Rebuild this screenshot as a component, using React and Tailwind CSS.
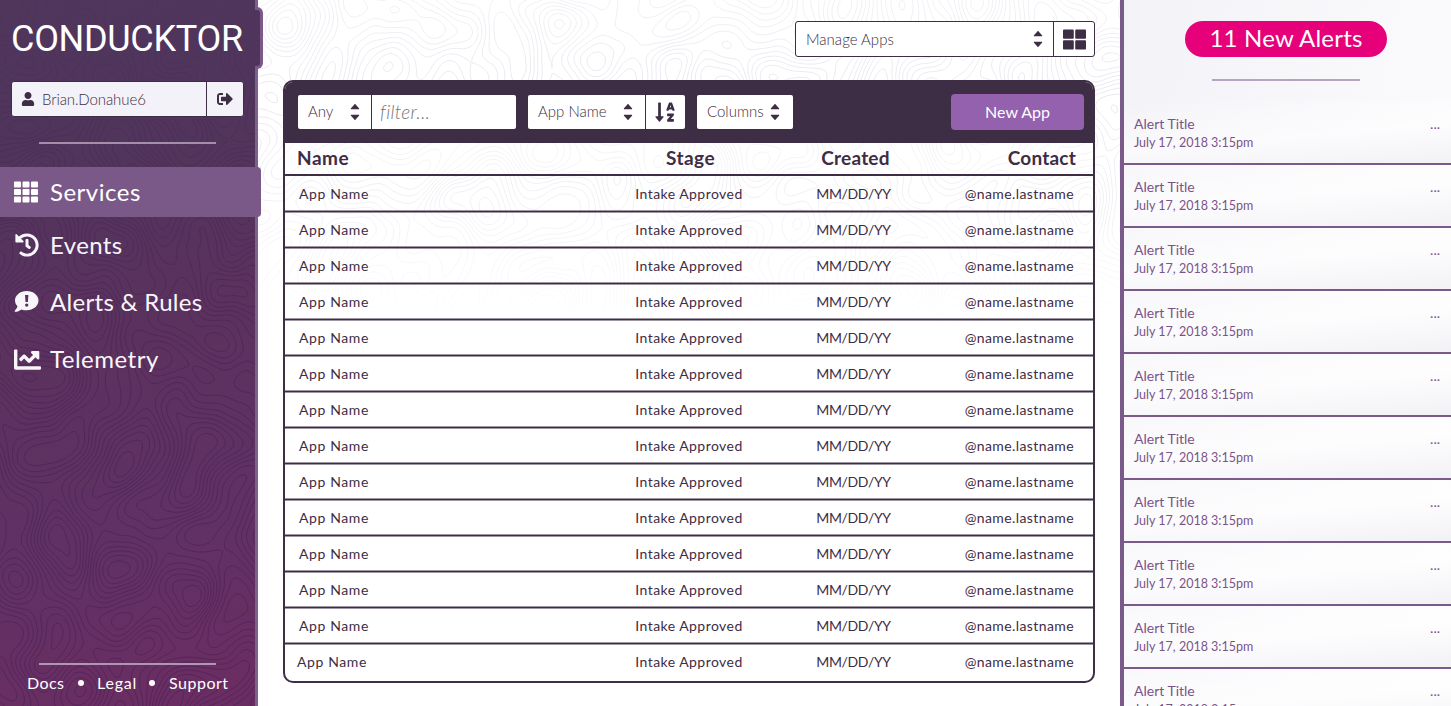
import React from 'react';
import { FaUser, FaSignOutAlt, FaTh, FaHistory, FaChartLine, FaThLarge, FaSortAlphaDown } from 'react-icons/fa';

// Seeded gradient noise, used as the height field of the topographic backdrop
function makeNoise(seed) {
  const angle = (x, y) => {
    let h = Math.imul(x, 374761393) + Math.imul(y, 668265263) + Math.imul(seed, 1274126177);
    h = Math.imul(h ^ (h >>> 13), 1274126177);
    return (((h ^ (h >>> 16)) >>> 0) / 4294967295) * Math.PI * 2;
  };
  const ease = (t) => t * t * t * (t * (t * 6 - 15) + 10);
  const dot = (xi, yi, x, y) => {
    const a = angle(xi, yi);
    return Math.cos(a) * (x - xi) + Math.sin(a) * (y - yi);
  };
  return (x, y) => {
    const xi = Math.floor(x);
    const yi = Math.floor(y);
    const u = ease(x - xi);
    const v = ease(y - yi);
    const top = dot(xi, yi, x, y) * (1 - u) + dot(xi + 1, yi, x, y) * u;
    const bottom = dot(xi, yi + 1, x, y) * (1 - u) + dot(xi + 1, yi + 1, x, y) * u;
    return top * (1 - v) + bottom * v;
  };
}

// Marching squares: returns one path with every contour line of the field
function contours(width, height, seed) {
  const noise = makeNoise(seed);
  const step = 3;
  const levels = 12.5;
  const field = (x, y) => {
    const u = x * 0.9 + y * 0.35;
    const v = y * 0.9 - x * 0.35;
    return (noise(u / 62, v / 72) + 0.2 * noise(u / 36 + 90, v / 38) + 10) * levels;
  };
  const cols = Math.ceil(width / step) + 1;
  const rows = Math.ceil(height / step) + 1;
  const grid = Array.from({ length: rows }, (_, j) => Array.from({ length: cols }, (_, i) => field(i * step, j * step)));
  let d = '';
  for (let j = 0; j < rows - 1; j++) {
    for (let i = 0; i < cols - 1; i++) {
      const a = grid[j][i];
      const b = grid[j][i + 1];
      const c = grid[j + 1][i + 1];
      const e = grid[j + 1][i];
      const lo = Math.ceil(Math.min(a, b, c, e));
      const hi = Math.floor(Math.max(a, b, c, e));
      for (let l = lo; l <= hi; l++) {
        const p = [];
        if (a < l !== b < l) p.push([i + (l - a) / (b - a), j]);
        if (b < l !== c < l) p.push([i + 1, j + (l - b) / (c - b)]);
        if (e < l !== c < l) p.push([i + (l - e) / (c - e), j + 1]);
        if (a < l !== e < l) p.push([i, j + (l - a) / (e - a)]);
        for (let k = 0; k + 1 < p.length; k += 2) {
          d += `M${(p[k][0] * step).toFixed(1)} ${(p[k][1] * step).toFixed(1)}L${(p[k + 1][0] * step).toFixed(1)} ${(p[k + 1][1] * step).toFixed(1)}`;
        }
      }
    }
  }
  return d;
}

const SIDE_LINES = contours(256, 706, 7);
const MAIN_LINES = contours(863, 500, 23);

const Carets = ({ className = '' }) => (
  <svg width="10" height="18" viewBox="0 0 10 18" className={className} fill="#3d2d45">
    <path d="M5 .8 9.200 5.600Q9.400 6.200 8.800 6.200H1.200Q.6 6.200.8 5.600ZM5 17.200 9.200 12.400Q9.400 11.800 8.800 11.800H1.200Q.6 11.800.8 12.400Z" />
  </svg>
);

const AlertBubble = () => (
  <svg width="25" height="22" viewBox="0 0 24 22" fill="currentColor">
    <path
      fillRule="evenodd"
      d="M12.2 0C5.7 0 .5 4.2.5 9.4c0 2.2 1 4.300 2.500 5.900-.5 2-2.200 3.800-2.800 4.600-.2.300 0 .9.500.9 2.700 0 4.900-1.300 6.200-2.400 1.600.6 3.400.9 5.300.9 6.500 0 11.800-4.200 11.800-9.700S18.700 0 12.200 0ZM10.500 4h3.400l-.5 7h-2.400ZM12.200 12.400a1.700 1.700 0 1 1 0 3.400 1.700 1.700 0 0 1 0-3.400Z"
    />
  </svg>
);

const ROWS = Array.from({ length: 14 }, (_, i) => i);
const ALERTS = Array.from({ length: 10 }, (_, i) => i);

function Sidebar() {
  return (
    <aside className="relative z-10 flex h-full w-[258px] shrink-0 flex-col border-r-[3px] border-[#7e6090] bg-[linear-gradient(165deg,#4f365b_0%,#50355b_20%,#5a325d_45%,#613164_75%,#6b2d61_100%)] text-[#f8f6fb]">
      <svg className="absolute inset-0" width="255" height="706">
        <defs>
          <linearGradient id="sideFade" x1="0" y1="0" x2="0" y2="1">
            <stop offset="0" stopColor="#fff" stopOpacity="0.05" />
            <stop offset="0.2" stopColor="#fff" stopOpacity="0.45" />
            <stop offset="0.5" stopColor="#fff" stopOpacity="0.75" />
            <stop offset="1" stopColor="#fff" stopOpacity="0.8" />
          </linearGradient>
          <mask id="sideMask">
            <rect width="255" height="706" fill="url(#sideFade)" />
          </mask>
        </defs>
        <path d={SIDE_LINES} fill="none" stroke="#481e58" strokeOpacity="0.7" strokeWidth="1" mask="url(#sideMask)" />
      </svg>
      <div className="absolute left-[250px] top-[7px] h-[62px] w-[13px] rounded-r-[6px] border-y-[3px] border-r-[3px] border-[#7b5a8b] bg-[#4f345b] [clip-path:polygon(5px_0,100%_0,100%_100%,5px_100%,5px_59px,0_59px,0_3px,5px_3px)]" />

      <h1 className="relative mt-[18px] w-[255px] pl-[11px] font-['Roboto'] text-[36px] leading-[42px] tracking-[-0.3px] text-white">CONDUCKTOR</h1>

      <div className="relative ml-[11px] mt-[21px] flex h-[36px] w-[233px] rounded-[3px] border border-[#3d2d45] bg-[#f3f2f8] text-[#3d2d45]">
        <div className="flex flex-1 items-center border-r border-[#3d2d45] pl-[9px]">
          <FaUser size={14} />
          <span className="pl-[7px] text-[15px] font-light tracking-[-0.1px]">Brian.Donahue6</span>
        </div>
        <div className="flex w-[36px] items-center justify-center">
          <FaSignOutAlt size={16} />
        </div>
      </div>

      <div className="relative ml-[39px] mt-[25px] h-[2px] w-[177px] bg-[#a38eac]" />

      <nav className="relative mt-[23px] flex flex-col text-[24px] tracking-[0.4px]">
        <a className="flex h-[50px] w-[261px] items-center rounded-r-[4px] bg-[#7a5988] pl-[14px] text-white">
          <span className="w-[36px]"><FaTh size={24} /></span>
          <span className="tracking-[0.5px]">Services</span>
        </a>
        <a className="flex h-[56px] items-center pl-[15px]">
          <span className="w-[35px]"><FaHistory size={24} /></span>
          Events
        </a>
        <a className="flex h-[57px] items-center pl-[14px]">
          <span className="w-[36px]"><AlertBubble /></span>
          <span className="tracking-[0.3px]">Alerts &amp; Rules</span>
        </a>
        <a className="flex h-[57px] items-center pl-[14px]">
          <span className="w-[36px] pt-px"><FaChartLine size={27} /></span>
          <span className="tracking-[0.5px]">Telemetry</span>
        </a>
      </nav>

      <div className="relative ml-[39px] mt-auto h-[2px] w-[177px] bg-[#b196b3]" />
      <footer className="relative mb-[11px] mt-[6px] flex h-[24px] items-center pl-[27px] text-[16px] tracking-[0.4px] text-white">
        <span className="w-[51px]">Docs</span>
        <span className="mr-[13px] size-[6px] rounded-full bg-white" />
        <span className="w-[52px] tracking-[0.8px]">Legal</span>
        <span className="mr-[14px] size-[6px] rounded-full bg-white" />
        <span className="tracking-[0.5px]">Support</span>
      </footer>
    </aside>
  );
}

function Toolbar() {
  return (
    <div className="flex h-[61px] items-center bg-[#3d2d45] pb-[2px] pl-[13px] pr-[9px] text-[15px] font-light text-[#3d2d45]">
      <div className="flex h-[34px] w-[218px] rounded-[2px] bg-white">
        <div className="flex w-[74px] items-center justify-between border-r border-[#3d2d45] pl-[10px] pr-[11px]">
          Any
          <Carets />
        </div>
        <span className="flex items-center pl-[8px] pt-[2px] text-[19px] italic tracking-[0.3px] text-[#757575]">filter...</span>
      </div>
      <div className="ml-[12px] flex h-[34px] w-[157px] rounded-[2px] bg-white">
        <div className="flex w-[118px] items-center justify-between border-r border-[#3d2d45] pl-[10px] pr-[12px]">
          App Name
          <Carets />
        </div>
        <div className="flex flex-1 items-center justify-center pr-[2px]">
          <FaSortAlphaDown size={22} />
        </div>
      </div>
      <div className="ml-[12px] flex h-[34px] w-[96px] items-center justify-between rounded-[2px] bg-white pl-[10px] pr-[13px]">
        Columns
        <Carets />
      </div>
      <button className="ml-auto h-[36px] w-[133px] rounded-[4px] bg-[#9461ae] text-[16px] font-normal text-white">New App</button>
    </div>
  );
}

function AppTable() {
  return (
    <section className="relative ml-[25px] mt-[23px] h-[603px] w-[812px] overflow-hidden rounded-[10px] border-2 border-[#3d2d45] text-[#3d2d45]">
      <Toolbar />
      <div className="flex h-[33px] items-center border-b-2 border-[#3d2d45] bg-white/40 text-[19px] font-bold">
        <span className="w-[348px] pl-[12px] tracking-[0.5px]">Name</span>
        <span className="w-[115px] text-center tracking-[0.5px]">Stage</span>
        <span className="ml-[50px] w-[115px] text-center tracking-[0.2px]">Created</span>
        <span className="flex-1 pr-[17px] text-right tracking-[0.2px]">Contact</span>
      </div>
      {ROWS.map((i) => (
        <div
          key={i}
          className="flex h-[36px] items-center border-b border-[#3d2d45] text-[14px] shadow-[0_1px_0_rgba(61,45,69,0.5),inset_0_-1px_0_rgba(61,45,69,0.5)] last:border-transparent last:shadow-none last:[&>span:first-child]:pl-[12px]"
        >
          <span className="w-[348px] pl-[14px] tracking-[0.6px]">App Name</span>
          <span className="w-[112px] text-center tracking-[0.45px]">Intake Approved</span>
          <span className="ml-[52px] w-[113px] text-center tracking-[-0.35px]">MM/DD/YY</span>
          <span className="flex-1 pr-[19px] text-right tracking-[0.4px]">@name.lastname</span>
        </div>
      ))}
    </section>
  );
}

function AlertsPanel() {
  return (
    <aside className="flex h-full w-[331px] shrink-0 flex-col border-l-4 border-[#7a5a8b] bg-[linear-gradient(100deg,#f3f2f7,#fdfdfe)] text-[#7a5488]">
      <div className="flex h-[102px] shrink-0 flex-col items-center pr-[3px] pt-[21px]">
        <div className="flex h-[36px] w-[202px] items-center justify-center rounded-full bg-[#e6007a] pb-[2px] text-[24px] tracking-[0.2px] text-white">11 New Alerts</div>
        <div className="mt-[22px] h-[2px] w-[148px] bg-[#b7a3c2]" />
      </div>
      {ALERTS.map((i) => (
        <div key={i} className="h-[63px] shrink-0 border-b-2 border-[#7a5a8b] bg-[linear-gradient(175deg,#ffffff55_0%,#ffffffaa_50%,#f2f1f5_100%)] pl-[10px] pt-[12px] first-of-type:bg-none [&:nth-child(2)]:bg-[linear-gradient(175deg,#ffffff00_0%,#ffffff88_55%,#f2f1f5_100%)]">
          <div className="flex justify-between pr-[11px] text-[14px] leading-[20px]">
            <span>Alert Title</span>
            <span>...</span>
          </div>
          <div className="text-[12.5px] leading-[18px]">July 17, 2018 3:15pm</div>
        </div>
      ))}
    </aside>
  );
}

export default function App() {
  return (
    <div className="flex h-[706px] w-[1451px] overflow-hidden bg-white font-['Lato',sans-serif]">
      <Sidebar />
      <main className="relative flex w-[862px] flex-col">
        <svg className="absolute inset-0" width="862" height="500">
          <defs>
            <linearGradient id="mainFade" x1="0" y1="0" x2="0" y2="1">
              <stop offset="0" stopColor="#fff" stopOpacity="0.6" />
              <stop offset="0.2" stopColor="#fff" stopOpacity="1" />
              <stop offset="0.5" stopColor="#fff" stopOpacity="0.4" />
              <stop offset="0.65" stopColor="#fff" stopOpacity="0" />
            </linearGradient>
            <mask id="mainMask">
              <rect width="862" height="500" fill="url(#mainFade)" />
            </mask>
          </defs>
          <path d={MAIN_LINES} fill="none" stroke="#e9e8f0" strokeWidth="1" mask="url(#mainMask)" />
        </svg>
        <div className="relative ml-[537px] mt-[21px] flex h-[36px] w-[300px] rounded-[3px] border border-[#3d2d45] bg-white text-[15px] font-light text-[#3d2d45]">
          <div className="flex w-[258px] items-center justify-between border-r border-[#3d2d45] pl-[10px] pr-[10px]">
            Manage Apps
            <Carets />
          </div>
          <div className="flex flex-1 items-center justify-center">
            <FaThLarge size={23} />
          </div>
        </div>
        <AppTable />
      </main>
      <AlertsPanel />
    </div>
  );
}
